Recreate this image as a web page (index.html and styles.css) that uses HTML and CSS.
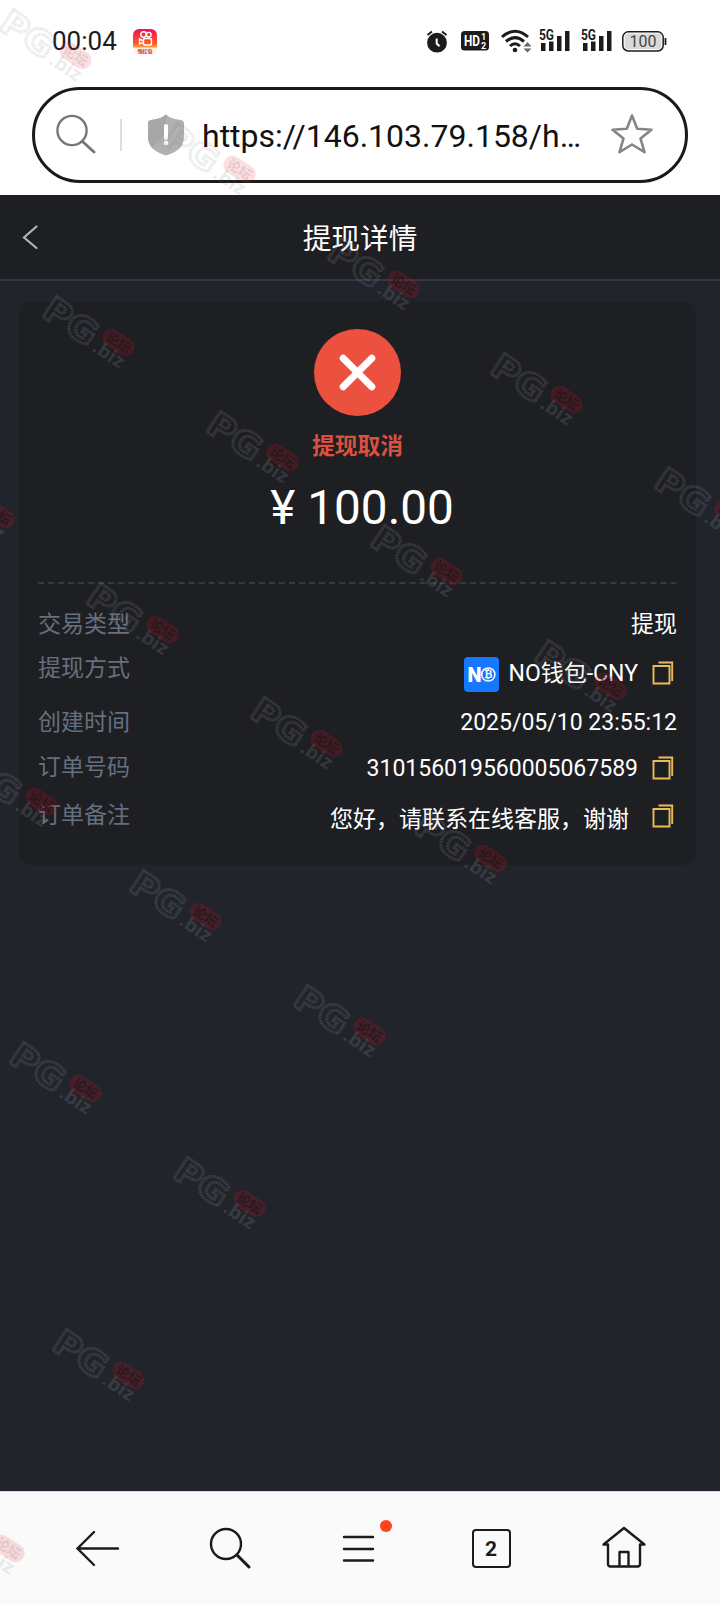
FILE: index.html
```html
<!DOCTYPE html>
<html lang="zh-CN">
<head>
<meta charset="utf-8">
<title>提现详情</title>
<link rel="stylesheet" href="styles.css">
</head>
<body>
<svg class="defs" aria-hidden="true">
  <symbol id="copy" viewBox="0 0 22 24"><path d="M1.500 5h16v17.500h-16zM6.500 1.500h13.700V20" fill="none" stroke="#e9bc5a" stroke-width="1.900"/></symbol>
  <symbol id="signal" viewBox="0 0 32 24">
    <text x="0" y="10.500" class="sig-text" textLength="15" lengthAdjust="spacingAndGlyphs">5G</text>
    <path d="M2 14h4.500v8H2zM10 12.500h4.500V22H10zM18 7h4.500v15H18zM26 2h4.500v20H26z" fill="#1c1c1c"/>
  </symbol>
  <symbol id="mark" viewBox="0 0 100 84" overflow="visible">
    <g transform="translate(0 22) rotate(34)"><text class="mark-pg" x="0" y="0" textLength="58" lengthAdjust="spacingAndGlyphs">PG</text></g>
    <g transform="translate(51 57) rotate(34)"><text class="mark-biz" x="0" y="0" textLength="34" lengthAdjust="spacingAndGlyphs">.biz</text></g>
    <g transform="translate(78.500 49.500) rotate(33)"><rect class="mark-pill" x="-17.500" y="-9" width="35" height="18" rx="9"/><text class="mark-cn" x="0" y="5">论坛</text></g>
  </symbol>
</svg>
<div class="screen">
  <div class="status">
    <span class="time">00:04</span>
    <svg class="app" width="24" height="25" viewBox="0 0 24 25">
      <defs><linearGradient id="g" x1="0" y1="0" x2="0" y2="1"><stop offset="0" stop-color="#ee1258"/><stop offset=".58" stop-color="#ff5a23"/><stop offset=".72" stop-color="#ff9d45"/><stop offset=".76" stop-color="#fff0d8"/></linearGradient></defs>
      <rect width="24" height="25" rx="6" fill="url(#g)"/>
      <g fill="none" stroke="#fff" stroke-width="1.400"><circle cx="10.500" cy="5.500" r="2.700"/><circle cx="15.800" cy="5.700" r="2.300"/><rect x="10.500" y="9.500" width="8" height="6.500" rx="1.500"/><path d="M10.500 12 6.500 10v5l4-1.500"/></g>
      <text x="12" y="23.500" text-anchor="middle" class="app-text">领红包</text>
    </svg>
    <div class="status-icons">
      <svg class="alarm" width="22" height="23" viewBox="0 0 22 23"><circle cx="11" cy="12.700" r="9.900" fill="#1c1c1c"/><path d="M1.500 5 6 1.500M20.500 5 16 1.500" stroke="#1c1c1c" stroke-width="2"/><path d="M10.700 8.500v5l2.800 2.700" fill="none" stroke="#fff" stroke-width="2"/></svg>
      <svg class="hd" width="28" height="20" viewBox="0 0 28 20"><rect width="28" height="19.500" rx="3.500" fill="#1c1c1c"/><text class="hd-main" x="3" y="15" textLength="16" lengthAdjust="spacingAndGlyphs">HD</text><text class="hd-small" x="20" y="9">1</text><text class="hd-small" x="20" y="17.500">2</text></svg>
      <svg class="wifi" width="30" height="24" viewBox="0 0 30 24"><g fill="none" stroke="#1c1c1c" stroke-width="3"><path d="M1 8Q14 -3.500 27 8M5 12.500q9-7.800 18 0M9 17q5-4.500 10 0"/></g><circle cx="14" cy="21" r="2.300" fill="#1c1c1c"/><path d="m26.500 13 4 4.500h-8zM26.500 23.500l-4-4h8z" fill="#666"/></svg>
      <svg class="sig" width="32" height="24"><use href="#signal"/></svg>
      <svg class="sig2" width="32" height="24"><use href="#signal"/></svg>
      <svg width="45" height="21" viewBox="0 0 45 21"><rect x=".8" y=".8" width="40.400" height="19.200" rx="5.500" fill="#fff" stroke="#1c1c1c" stroke-width="1.500"/><rect x="2.600" y="2.600" width="36.800" height="15.600" rx="3.500" fill="#dadada"/><path d="M43.500 7v7" stroke="#1c1c1c" stroke-width="1.800"/><text class="bat" x="21" y="16" textLength="27">100</text></svg>
    </div>
  </div>
  <div class="address">
    <svg class="find" width="42" height="42" viewBox="0 0 42 42" fill="none" stroke="#777" stroke-linecap="round"><circle cx="16" cy="16.500" r="14.600" stroke-width="2.400"/><path d="M26.500 27.500 38 38" stroke-width="3"/></svg>
    <span class="divider"></span>
    <svg class="shield" width="36" height="42" viewBox="0 0 36 42"><path d="M18 .5Q23 5 33 6q3 .5 3 3.500v13Q36 32 29 36.500q-4 3-11 5-7-2-11-5-7-4.500-7-14v-13Q0 6.500 3 6 13 5 18 .5Z" fill="#b0b0b0"/><path d="M18 .5v20L4.500 33.500Q0 29 0 22.500v-13Q0 6.500 3 6 13 5 18 .5Z" fill="#a7a7a7"/><path d="M18 12v12" stroke="#fff" stroke-width="4" stroke-linecap="round"/><circle cx="18" cy="29" r="2.400" fill="#fff"/></svg>
    <span class="url">https://146.103.79.158/h…</span>
    <svg class="star" width="42" height="42" viewBox="0 0 42 42"><path d="m21 1.500 5.200 13.300 14.300.9L29.500 24.500 33.500 38.200 21 30.500 8.500 38.200l4-13.700L1.500 15.700l14.300-.9Z" fill="none" stroke="#858585" stroke-width="2.600" stroke-linejoin="round"/></svg>
  </div>
  <header class="header">
    <svg class="back" width="17" height="26" viewBox="0 0 17 26"><path d="M14.500 2.500 2 13.500l12.500 10.500" fill="none" stroke="#abb4c2" stroke-width="2.200" stroke-linecap="round"/></svg>
    <h1>提现详情</h1>
  </header>
  <main class="content">
    <section class="card">
      <svg class="cancel" width="88" height="88" viewBox="0 0 88 88"><circle cx="43.500" cy="43.500" r="43.500" fill="#ec503e"/><path d="m29.200 29.200 28.600 28.600m0-28.600-28.600 28.600" stroke="#fff" stroke-width="7" stroke-linecap="round"/></svg>
      <div class="state">提现取消</div>
      <div class="amount"><span>¥</span><span>100.00</span></div>
      <svg class="dash" width="640" height="2"><path d="M0 1h640" stroke="#343a44" stroke-width="2" stroke-dasharray="6 4.040"/></svg>
      <div class="row type"><span class="label">交易类型</span><span class="value">提现</span></div>
      <div class="row method"><span class="label">提现方式</span><span class="value">
        <svg class="wallet" width="35" height="35" viewBox="0 0 35 35"><rect width="35" height="35" rx="4" fill="#1677ff"/><text class="n" x="3.500" y="24.500">N</text><circle cx="24.300" cy="17.500" r="6.600" fill="none" stroke="#fff" stroke-width="1.500"/><text class="b" x="24.300" y="21">₿</text></svg>
        <span>NO钱包-CNY</span><svg class="copy" width="22" height="24"><use href="#copy"/></svg></span></div>
      <div class="row date"><span class="label">创建时间</span><span class="value">2025/05/10 23:55:12</span></div>
      <div class="row order"><span class="label">订单号码</span><span class="value"><span>310156019560005067589</span><svg class="copy" width="22" height="24"><use href="#copy"/></svg></span></div>
      <div class="row remark"><span class="label">订单备注</span><span class="value"><span>您好，请联系在线客服，谢谢</span><svg class="copy" width="22" height="24"><use href="#copy"/></svg></span></div>
    </section>
  </main>
  <nav class="toolbar">
    <svg width="46" height="46" viewBox="0 0 46 46" fill="none" stroke="#1b1b1b" stroke-width="2.400" stroke-linecap="round"><path d="M43 23.500H3M19 7 2.500 23.500 19 40"/></svg>
    <svg width="46" height="46" viewBox="0 0 46 46" fill="none" stroke="#1b1b1b" stroke-linecap="round"><circle cx="19" cy="19" r="15" stroke-width="2.400"/><path d="M30 30 42 42" stroke-width="3"/></svg>
    <span class="menu"><svg width="46" height="46" viewBox="0 0 46 46"><path d="M6 12h29M6 24h29M6 35.500h29" stroke="#1b1b1b" stroke-width="2.400" stroke-linecap="round"/></svg><i class="dot"></i></span>
    <span class="tabs">2</span>
    <svg width="46" height="46" viewBox="0 0 46 46" fill="none" stroke="#1b1b1b" stroke-width="2.400" stroke-linejoin="round" stroke-linecap="round"><path d="M2.500 19.500 23 3l20.500 16.500H39V39q0 2.500-2.500 2.500h-27Q7 41.500 7 39V19.500ZM18.500 41V27h9v14"/></svg>
  </nav>
  <svg class="watermarks" width="720" height="1604" viewBox="0 0 720 1604">
    <g class="on-light">
      <use href="#mark" x="-3" y="6" width="100" height="84"/>
      <use href="#mark" x="161" y="120" width="100" height="84"/>
      <use href="#mark" x="-70" y="1499" width="100" height="84"/>
    </g>
    <g class="on-dark">
      <use href="#mark" x="325" y="235" width="100" height="84"/>
      <use href="#mark" x="40" y="293" width="100" height="84"/>
      <use href="#mark" x="488" y="350" width="100" height="84"/>
      <use href="#mark" x="204" y="408" width="100" height="84"/>
      <use href="#mark" x="-80" y="465" width="100" height="84"/>
      <use href="#mark" x="652" y="464" width="100" height="84"/>
      <use href="#mark" x="368" y="522" width="100" height="84"/>
      <use href="#mark" x="84" y="580" width="100" height="84"/>
      <use href="#mark" x="532" y="637" width="100" height="84"/>
      <use href="#mark" x="248" y="694" width="100" height="84"/>
      <use href="#mark" x="-37" y="752" width="100" height="84"/>
      <use href="#mark" x="412" y="809" width="100" height="84"/>
      <use href="#mark" x="127" y="867" width="100" height="84"/>
      <use href="#mark" x="291" y="982" width="100" height="84"/>
      <use href="#mark" x="7" y="1039" width="100" height="84"/>
      <use href="#mark" x="171" y="1154" width="100" height="84"/>
      <use href="#mark" x="50" y="1326" width="100" height="84"/>
    </g>
  </svg>
</div>
</body>
</html>
```

FILE: styles.css
```css
* { box-sizing: border-box; }
body {
  margin: 0;
  font-family: Roboto, "Noto Sans CJK SC", sans-serif;
  background: #21242b;
}
svg { display: block; flex: none; }
.defs { position: absolute; width: 0; height: 0; }
.screen {
  position: relative;
  display: flex;
  flex-direction: column;
  width: 720px;
  height: 1604px;
  overflow: hidden;
  background: #fff;
}

/* Phone status bar */
.status {
  display: flex;
  align-items: center;
  height: 87px;
  padding: 0 53px 5px 52px;
  background: #fff;
}
.time { width: 81px; font-size: 26px; color: #1c1c1c; }
.status-icons { display: flex; align-items: center; margin-left: auto; }
.alarm { margin-right: 13px; }
.hd { margin-right: 12px; }
.wifi { margin-right: 8px; overflow: visible; }
.sig { margin-right: 10px; }
.sig2 { margin-right: 9px; }
.app-text { font-size: 5px; font-weight: 700; fill: #d51f26; }
.sig-text { font-size: 14px; font-weight: 700; fill: #1c1c1c; }
.hd-main { font-size: 15px; font-weight: 700; fill: #fff; }
.hd-small { font-size: 9px; font-weight: 700; fill: #fff; }
.bat { font-size: 16px; fill: #444; text-anchor: middle; }

/* Address bar */
.address {
  display: flex;
  align-items: center;
  flex: none;
  width: 656px;
  height: 96px;
  margin: 0 32px 12px;
  padding: 0 32px 0 21px;
  border: 3px solid #1a1a1c;
  border-radius: 48px;
  background: #fff;
}
.divider { width: 2px; height: 32px; margin: 0 26px 0 22px; background: #dedede; }
.shield { margin-right: 18px; }
.url { flex: 1; font-size: 32px; line-height: 40px; padding-top: 2px; white-space: nowrap; color: #111; }

/* Page header */
.header {
  display: flex;
  align-items: center;
  flex: none;
  height: 86px;
  padding: 0 22px;
  border-bottom: 2px solid #323843;
  background: #1e1f23;
}
h1 {
  flex: 1;
  margin: 0 17px 2px 0;
  text-align: center;
  font-size: 28.700px;
  font-weight: 400;
  color: #fff;
}

/* Detail card */
.content { flex: 1; padding: 20px 24px 0 19px; background: #21242b; }
.card {
  display: flex;
  flex-direction: column;
  height: 564px;
  padding: 28px 19px 0;
  border-radius: 13px;
  background: #1e1f23;
}
.cancel { align-self: center; }
.state {
  margin-top: 13px;
  height: 34px;
  line-height: 34px;
  text-align: center;
  font-size: 22.800px;
  font-weight: 700;
  color: #dc503f;
}
.amount {
  display: flex;
  justify-content: center;
  gap: 12px;
  height: 60px;
  margin: 14px 0 44px 9px;
  line-height: 61px;
  font-size: 47.700px;
  color: #fff;
}
.row {
  display: flex;
  justify-content: space-between;
  align-items: flex-start;
  font-size: 23px;
  line-height: 34px;
  color: #fff;
}
.label { color: #66707e; }
.value { display: flex; align-items: center; }
.type { height: 44px; margin-top: 24px; }
.method { height: 54px; }
.method .value { height: 44px; }
.date { height: 45px; }
.order { height: 48px; }
.order .value { height: 36px; }
.remark .value { height: 42px; }
.wallet { margin-right: 10px; }
.copy { margin: -3px 3px 0 14px; }
.remark .copy { margin: -9px 3px 0 23px; }
.n { font-size: 20px; font-weight: 900; fill: #fff; }
.b { font: 700 10px "DejaVu Sans", sans-serif; fill: #fff; text-anchor: middle; }

/* Browser toolbar */
.toolbar {
  display: flex;
  align-items: center;
  justify-content: space-between;
  flex: none;
  height: 113px;
  padding: 0 73px 0 75px;
  border-top: 1px solid #d8d8dc;
  background: #fafafa;
}
.menu { position: relative; }
.dot {
  position: absolute;
  top: -5px;
  left: 42px;
  width: 12px;
  height: 12px;
  border-radius: 50%;
  background: #ff431c;
}
.tabs {
  width: 39px;
  height: 39px;
  margin: 0 5px 0 2px;
  border: 2.400px solid #1b1b1b;
  border-radius: 4px;
  line-height: 36px;
  text-align: center;
  font-size: 21px;
  font-weight: 700;
  color: #1b1b1b;
}

/* Watermark overlay */
.watermarks { position: absolute; inset: 0; pointer-events: none; }
.mark-pg {
  font: 700 34px "DejaVu Sans", sans-serif;
  fill: none;
  stroke: currentColor;
  stroke-width: 3px;
  stroke-dasharray: 2.200 .6;
}
.mark-biz { font: 700 19px "Open Sans", sans-serif; fill: currentColor; }
.mark-cn {
  font: 700 13.500px "Noto Sans CJK SC", sans-serif;
  text-anchor: middle;
  fill: var(--mark-ink);
}
.mark-pill { fill: var(--mark-red); }
.on-light { color: rgba(110, 110, 120, .14); --mark-ink: rgba(130, 80, 80, .18); --mark-red: rgba(230, 50, 60, .15); }
.on-dark { color: rgba(150, 155, 165, .2); --mark-ink: rgba(25, 20, 24, .65); --mark-red: rgba(180, 20, 35, .25); }
```
